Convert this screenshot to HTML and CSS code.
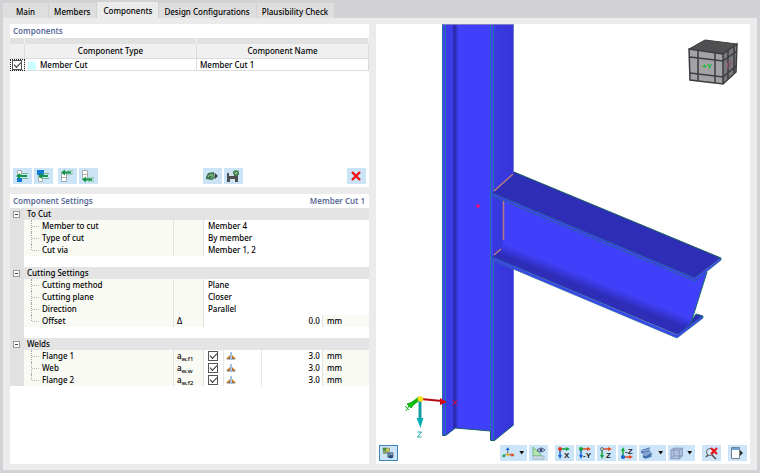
FILE: index.html
```html
<!DOCTYPE html>
<html lang="en">
<head>
<meta charset="utf-8">
<title>Steel Joint - Components</title>
<link rel="stylesheet" href="styles.css">
</head>
<body>
<nav class="tabs">
  <button class="tab tab-main">Main</button>
  <button class="tab">Members</button>
  <button class="tab active">Components</button>
  <button class="tab">Design Configurations</button>
  <button class="tab">Plausibility Check</button>
</nav>
<main class="page">
  <div class="side">
    <section class="panel components">
      <h2 class="title">Components</h2>
      <table class="list">
        <colgroup><col class="c-check"><col><col></colgroup>
        <thead>
          <tr class="strip"><td></td><td></td><td></td></tr>
          <tr><th></th><th>Component Type</th><th>Component Name</th></tr>
        </thead>
        <tbody>
          <tr>
            <td class="focus"><input type="checkbox" class="check" aria-label="Use Member Cut 1" checked></td>
            <td><span class="swatch"></span>Member Cut</td>
            <td>Member Cut 1</td>
          </tr>
        </tbody>
      </table>
      <div class="bar">
        <div class="group">
          <button class="tool" aria-label="Insert before"><svg viewBox="0 0 19 16"><path d="M4.500 2.500h4v4h-4z" fill="#fff" stroke="#aaa"/><path d="M4 10h5v4H4z" fill="#1479d4"/><path d="M9 5.500h6M9 10.500h6" stroke="#6fbf91"/><path d="M3 8l4-3v2h7v2H7v2z" fill="#169447"/></svg></button>
          <button class="tool" aria-label="Insert after"><svg viewBox="0 0 19 16"><path d="M3 2h7v5H3z" fill="#1479d4"/><path d="M4.500 9.500h4v4h-4z" fill="#fff" stroke="#aaa"/><path d="M9 5.500h6M9 10.500h6" stroke="#6fbf91"/><path d="M4 8l4-3v2h6v2H8v2z" fill="#169447"/></svg></button>
        </div>
        <div class="group">
          <button class="tool" aria-label="Move to top"><svg viewBox="0 0 19 16"><path d="M3.500 5.500h5v8h-5zM3.500 9.500h5" fill="#fff" stroke="#aaa"/><path d="M9 3h6M9 6h6" stroke="#6fbf91"/><path d="M3 4.500l4-3v2h6v2H7v2z" fill="#169447"/></svg></button>
          <button class="tool" aria-label="Move to bottom"><svg viewBox="0 0 19 16"><path d="M3.500 2.500h5v8h-5zM3.500 6.500h5" fill="#fff" stroke="#aaa"/><path d="M9 10h6M9 13h6" stroke="#6fbf91"/><path d="M3 11.500l4-3v2h6v2H7v2z" fill="#169447"/></svg></button>
        </div>
        <div class="group center">
          <button class="tool" aria-label="Load component"><svg viewBox="0 0 19 16"><path d="M3 9l2-4 6-1 1 6-3 2-6-1z" fill="#3e7650"/><path d="M5 9q1-3 4-2t-1 3" fill="none" stroke="#a8d9a9"/><path d="M12 5l3 3-3 3z" fill="#444"/></svg></button>
          <button class="tool" aria-label="Save component"><svg viewBox="0 0 19 16"><path d="M3 5h11v9H3z" fill="#4b4e51"/><path d="M5 5h5v3H5zM6 11h5v3H6z" fill="#d4e2ec"/><path d="M9 6V3l3-1 3 1v4l-3 1z" fill="#4e8b59"/><path d="M11 6l2-2" stroke="#b6dfba"/></svg></button>
        </div>
        <button class="tool" aria-label="Delete component"><svg viewBox="0 0 19 16"><path d="M5 4l8 8M13 4l-8 8" stroke="#f20d0d" stroke-width="2.300"/></svg></button>
      </div>
    </section>
    <section class="panel settings">
      <h2 class="title">Component Settings<span>Member Cut 1</span></h2>
      <table class="props">
        <colgroup><col class="p-gutter"><col><col class="p-symbol"><col class="p-check"><col class="p-icon"><col class="p-value"><col class="p-unit"></colgroup>
        <tbody>
          <tr class="head"><td><button class="toggle" aria-label="Collapse To Cut"></button></td><th colspan="6">To Cut</th></tr>
          <tr><td></td><th>Member to cut</th><td class="sym"></td><td colspan="4">Member 4</td></tr>
          <tr><td></td><th>Type of cut</th><td class="sym"></td><td colspan="4">By member</td></tr>
          <tr class="last"><td></td><th>Cut via</th><td class="sym"></td><td colspan="4">Member 1, 2</td></tr>
          <tr class="space"><td></td><td colspan="6"></td></tr>
        </tbody>
        <tbody>
          <tr class="head"><td><button class="toggle" aria-label="Collapse Cutting Settings"></button></td><th colspan="6">Cutting Settings</th></tr>
          <tr><td></td><th>Cutting method</th><td class="sym"></td><td colspan="4">Plane</td></tr>
          <tr><td></td><th>Cutting plane</th><td class="sym"></td><td colspan="4">Closer</td></tr>
          <tr><td></td><th>Direction</th><td class="sym"></td><td colspan="4">Parallel</td></tr>
          <tr class="last"><td></td><th>Offset</th><td class="sym">Δ</td><td colspan="3" class="num">0.0</td><td class="unit">mm</td></tr>
          <tr class="space"><td></td><td colspan="6"></td></tr>
        </tbody>
        <tbody class="welds">
          <tr class="head"><td><button class="toggle" aria-label="Collapse Welds"></button></td><th colspan="6">Welds</th></tr>
          <tr><td></td><th>Flange 1</th><td class="sym">a<small>w,f1</small></td><td><input type="checkbox" class="check" aria-label="Weld flange 1" checked></td><td class="line"><svg class="weld" viewBox="0 0 10 10"><path d="M4 1h2v6h3v2H1V7h3z" fill="#9fc0e3"/><path d="M4 4v4H0zM6 4v4h4z" fill="#bd721d"/></svg></td><td class="num line">3.0</td><td class="unit">mm</td></tr>
          <tr><td></td><th>Web</th><td class="sym">a<small>w,w</small></td><td><input type="checkbox" class="check" aria-label="Weld web" checked></td><td class="line"><svg class="weld" viewBox="0 0 10 10"><path d="M4 1h2v6h3v2H1V7h3z" fill="#9fc0e3"/><path d="M4 4v4H0zM6 4v4h4z" fill="#bd721d"/></svg></td><td class="num line">3.0</td><td class="unit">mm</td></tr>
          <tr class="last"><td></td><th>Flange 2</th><td class="sym">a<small>w,f2</small></td><td><input type="checkbox" class="check" aria-label="Weld flange 2" checked></td><td class="line"><svg class="weld" viewBox="0 0 10 10"><path d="M4 1h2v6h3v2H1V7h3z" fill="#9fc0e3"/><path d="M4 4v4H0zM6 4v4h4z" fill="#bd721d"/></svg></td><td class="num line">3.0</td><td class="unit">mm</td></tr>
        </tbody>
      </table>
    </section>
  </div>
  <section class="panel viewer">
    <svg class="scene" viewBox="376 24 374 440" preserveAspectRatio="xMidYMin meet" role="img" aria-label="Steel joint model">
      <defs>
        <linearGradient id="fold"><stop offset="0" stop-color="#3737df"/><stop offset=".3" stop-color="#2828a4"/><stop offset=".5" stop-color="#2d2db6"/><stop offset="1" stop-color="#4040fa"/></linearGradient>
        <linearGradient id="rearFlange"><stop offset="0" stop-color="#3a3ae2"/><stop offset="1" stop-color="#3535d8"/></linearGradient>
        <linearGradient id="lower" gradientUnits="userSpaceOnUse" x1="600" y1="282" x2="594" y2="297"><stop offset="0" stop-color="#4040fa"/><stop offset=".7" stop-color="#2d2db8"/></linearGradient>
      </defs>
      <!-- column -->
      <path d="M442.500 24H513.500V425L494.500 440.500L491 440V431L455 428L445.500 435.500H442.500z" fill="#4040fa"/>
      <path d="M446 24h10v404l-10 7.500z" fill="#3b3bea"/>
      <path d="M452.500 24h6v404h-6z" fill="url(#fold)"/>
      <path d="M494 24h19.500v401L494 440.500z" fill="url(#rearFlange)"/>
      <path d="M442.500 24V435.500M445.500 24V435.500M490.500 24V440M493.500 24V440.500" fill="none" stroke="#23789b"/>
      <path d="M442.500 435.500h3L455 428l35.500 3v9.500h4L513.500 425" fill="none" stroke="#176269"/>
      <path d="M513.500 24V172" stroke="#728aba" stroke-width=".6"/>
      <path d="M442.500 24.500h71" stroke="#8080c7"/>
      <!-- beam -->
      <path d="M696 314l7 2-25 19 12-12z" fill="#2d2db5" stroke="#17696d"/>
      <path d="M502 198L707 272L690 326L502 250z" fill="#4040fa"/>
      <path d="M503 198v51l-10 7v-60z" fill="#3737de"/>
      <path d="M503 240L692 318L690 326L678 335L492 257L502 249z" fill="url(#lower)"/>
      <path d="M690 326L707 272" stroke="#17696d"/>
      <path d="M492 257L677 335L703 316V318L677 338L492 260z" fill="#4040f5" stroke="#236f9b" stroke-width=".8"/>
      <path d="M514 172L721 258L694.500 278L492 193z" fill="#2d2db5"/>
      <path d="M514 172L721 258" stroke="#195d62"/>
      <path d="M492 193L694.500 278L721 258V260L695 281L492 196z" fill="#4040f0" stroke="#236f8b" stroke-width=".8"/>
      <path d="M494 191l19-17M503.500 201v39M494 255l7-6" stroke="#b77983" stroke-width="1.500"/>
      <path d="M476 206h4M478 204v4" stroke="#f00b6d" stroke-width="1.500"/>
      <!-- axes -->
      <path d="M420 398l-8 6" stroke="#10ba13" stroke-width="4"/>
      <path d="M416 401l-9 3 4 4zM405 406l4 4M409 406l-3 5" fill="#0ec60e" stroke="#10ad10"/>
      <path d="M420 399v20" stroke="#159da4" stroke-width="3"/>
      <path d="M416.500 418h7l-3 10z" fill="#08adb5"/>
      <path d="M421 399l21 2" stroke="#b70b12" stroke-width="2"/>
      <path d="M440 398l7 4-7 3z" fill="#d20810"/>
      <circle cx="420.500" cy="399" r="2.800" fill="#f7df18"/>
      <path d="M453 400l4 5M457 400l-4 5" stroke="#dd0b36"/>
      <path d="M417.500 432h4l-4 5h4" fill="none" stroke="#15a6ac"/>
      <!-- orientation cube -->
      <path d="M689 49l16-9 32 4-14 10z" fill="#505052"/>
      <path d="M689 49l34 5v30l-33-4z" fill="#a3a3a7"/>
      <path d="M723 54l14-10-1 28-13 12z" fill="#77777c"/>
      <path d="M689 49l34 5v30l-33-4zM723 54l14-10-1 28-13 12M698 50v31M715 53v30M690 57l33 4 14-10M690 73l33 4 13-11M728 50v29M734 46v28" fill="none" stroke="#3d3d40" stroke-width="1.500"/>
      <path d="M689 49l16-9 32 4" fill="none" stroke="#3d3d40"/>
      <text class="face" x="702" y="69" fill="#10bc25">+Y</text>
      <path d="M727.500 63l3-2v5l-3 2z" fill="none" stroke="#98525a"/>
    </svg>
    <div class="bar viewbar">
      <button class="tool pressed" aria-label="Display options"><svg viewBox="0 0 19 16"><path d="M3 2h8v7H3z" fill="#849f70"/><path d="M3 2h4v3H3z" fill="#438f3d"/><path d="M7 3h3v3H7z" fill="#e5c946"/><path d="M8 7h7v6H8z" fill="#738da9"/><circle cx="12" cy="11" r="3" fill="#294f7d"/><path d="M10 11l2-2 2 1" stroke="#d8e4ef" fill="none"/></svg></button>
      <div class="group end">
        <button class="tool drop" aria-label="Axes"><svg viewBox="0 0 28 16"><path d="M8 9V3M8 9l-5 2M8 9l6 2" stroke="#3c6cac" fill="none"/><path d="M6 5l2-3 2 3z" fill="#1758c5"/><circle cx="4" cy="11" r="1.500" fill="#16a653"/><path d="M9 10h5" stroke="#e76528"/><path d="M12 8l3 2-3 2z" fill="#e34216"/><circle cx="8" cy="9.500" r="1.500" fill="#e8b32d"/><path d="M20 6h5l-2.500 3.500z" fill="#111"/></svg></button>
        <button class="tool" aria-label="Visibility"><svg viewBox="0 0 19 16"><path d="M4 2v9h9z" fill="#b6e5b2" stroke="#68b978"/><path d="M4 11h11v3H4z" fill="#d1dce4" stroke="#8cabb7" stroke-width=".7"/><path d="M8 5q4-4 8 0-4 4-8 0z" fill="#d6dfed" stroke="#4c5d86"/><circle cx="12" cy="5" r="1.500" fill="#344a79"/></svg></button>
      </div>
      <div class="group">
        <button class="tool axis" aria-label="View in X"><svg viewBox="0 0 19 16"><path d="M5 4v8" stroke="#1464db" stroke-width="1.500"/><path d="M5 4h8" stroke="#12a542" stroke-width="1.500"/><path d="M3 10h4l-2 4z" fill="#1464db"/><path d="M11 2l4 2-4 2z" fill="#12a542"/><circle cx="5" cy="4" r="2" fill="#e43920"/><text x="9" y="13">X</text></svg></button>
        <button class="tool axis" aria-label="View in -Y"><svg viewBox="0 0 19 16"><path d="M5 4v8" stroke="#1464db" stroke-width="1.500"/><path d="M5 4h8" stroke="#e54b21" stroke-width="1.500"/><path d="M3 10h4l-2 4z" fill="#1464db"/><path d="M11 2l4 2-4 2z" fill="#e54b21"/><circle cx="5" cy="4" r="2" fill="#12a542"/><text x="7" y="13">-Y</text></svg></button>
        <button class="tool axis" aria-label="View in Z"><svg viewBox="0 0 19 16"><path d="M5 4v8" stroke="#12a542" stroke-width="1.500"/><path d="M5 4h8" stroke="#e54b21" stroke-width="1.500"/><path d="M3 10h4l-2 4z" fill="#12a542"/><path d="M11 2l4 2-4 2z" fill="#e54b21"/><circle cx="5" cy="4" r="1.500" fill="#e9e465" stroke="#586fbd"/><text x="9" y="13">Z</text></svg></button>
        <button class="tool axis" aria-label="View in -Z"><svg viewBox="0 0 19 16"><path d="M5 12V4" stroke="#12a542" stroke-width="1.500"/><path d="M5 12h8" stroke="#e54b21" stroke-width="1.500"/><path d="M3 6h4L5 2z" fill="#12a542"/><path d="M11 10l4 2-4 2z" fill="#e54b21"/><circle cx="5" cy="12" r="2" fill="#1464db"/><text x="7" y="9">-Z</text></svg></button>
        <button class="tool drop" aria-label="Render mode"><svg viewBox="0 0 28 16"><path d="M2 5l3-1 6-2v5l-6 2-3-1z" fill="#527bb7"/><path d="M2 5l3 1 6-2" fill="none" stroke="#a8c4e4"/><path d="M4 10l3 1 6-2v-2l-2-1-7 2z" fill="#86a4ce"/><path d="M4 10v3l3 1 6-2V8l-6 3z" fill="#4672ad"/><path d="M20 6h5l-2.500 3.500z" fill="#111"/></svg></button>
        <button class="tool drop" aria-label="Box display"><svg viewBox="0 0 28 16"><path d="M3 5l3-2h9v8l-3 3H3z" fill="#afc1df"/><path d="M3 5l3-2h9v8l-3 3H3zM3 5h9v9M12 5l3-2M6 3v8h9M6 11l-3 3" fill="none" stroke="#8499bd"/><path d="M20 6h5l-2.500 3.500z" fill="#111"/></svg></button>
      </div>
      <button class="tool" aria-label="Reset selection"><svg viewBox="0 0 19 16"><circle cx="8" cy="7" r="3.500" fill="#dbe9f3" stroke="#596570"/><path d="M10 10l4 4M6 10l-2 2" stroke="#594c44" stroke-width="1.500"/><path d="M9 3l6 6M15 3L9 9" stroke="#ef1015" stroke-width="2"/></svg></button>
      <button class="tool" aria-label="Dock panel"><svg viewBox="0 0 19 16"><path d="M3.500 2.500h8v11h-8z" fill="#fff" stroke="#718190"/><path d="M4 3h7v2H4z" fill="#70a6d6"/><path d="M12 5l3 3-3 3z" fill="#333"/></svg></button>
    </div>
  </section>
</main>
</body>
</html>
```
FILE: styles.css
```css
* { box-sizing: border-box; }
body {
  margin: 0;
  min-height: 100vh;
  display: flex;
  flex-direction: column;
  padding: 3px;
  background: #d1d1d6;
  color: #000;
  font: 500 8px/12px "Noto Sans", "Open Sans", sans-serif;
}
button { border: 0; padding: 0; font: inherit; color: inherit; }
.tabs { display: flex; align-items: flex-end; height: 15px; }
.tab { height: 15px; padding: 2px 6px 0 5px; background: #dedede; border-right: 1px solid #d1d1d1; white-space: nowrap; }
.tab-main { padding: 2px 13px 0; }
.tab.active { height: 16px; padding: 2px 6px 0; background: #ebebeb; }
.page {
  flex: 1;
  display: grid;
  grid-template-columns: 359fr 374fr;
  gap: 7px;
  padding: 6px 7px;
  background: #ebebeb;
}
.side { display: flex; flex-direction: column; gap: 7px; min-width: 0; }
.panel { background: #fff; }
.components { display: flex; flex-direction: column; flex: 163 0 auto; min-height: 163px; }
.settings { flex: 270 0 auto; min-height: 270px; }
.title {
  display: flex;
  justify-content: space-between;
  margin: 0;
  padding: 0 4px 0 3px;
  font-size: 8px;
  line-height: 14px;
  font-weight: 600;
  color: #5b6c98;
}
table { width: 100%; table-layout: fixed; border-collapse: separate; border-spacing: 0; }
th, td { padding: 0; font-weight: inherit; text-align: left; white-space: nowrap; }

.c-check { width: 15px; }
.list td, .list th { height: 12px; border-right: 1px solid #dcdcdc; border-bottom: 1px solid #dcdcdc; }
.list .strip td { height: 6px; background: #e1e1e1; border-right-color: #f0f0f0; border-bottom: 0; }
.list th { height: 15px; background: #f0f0f0; text-align: center; }
.list tbody td { padding-left: 3px; line-height: 11px; }
.list tbody .focus { padding: 0; outline: 1px dotted #222; outline-offset: -1px; text-align: center; }
.swatch { display: inline-block; width: 8px; height: 8px; margin-right: 4px; background: #ccffff; vertical-align: middle; }
.check {
  appearance: none;
  display: block;
  width: 10px;
  height: 10px;
  margin: 0 auto;
  border: 1px solid #555;
  background: #fff;
}
.check:checked::before {
  content: "";
  display: block;
  width: 6px;
  height: 3px;
  margin: 1px;
  border: solid #333;
  border-width: 0 0 1px 1px;
  transform: rotate(-45deg);
}

.bar { display: flex; align-items: center; margin-top: auto; padding: 3px; gap: 5px; }
.group { display: flex; gap: 2px; }
.center { margin: 0 auto; }
.tool { display: block; width: 19px; height: 16px; background: #cce4f7; }
.tool svg { display: block; width: 100%; height: 100%; }
.drop { width: 27px; }
.pressed { border: 1px solid #3f84b8; }

.p-gutter { width: 14px; }
.p-symbol { width: 31px; }
.p-check { width: 19px; }
.p-icon { width: 38px; }
.p-value { width: 61px; }
.p-unit { width: 47px; }
.props tr { height: 12px; }
.props td:first-child { background: #e1e1e1; }
.props .space, .props .space td { height: 11px; line-height: 11px; }
.head { background: #e4e4e4; }
.props .head th { padding-left: 3px; background: none; }
.props th { position: relative; padding-left: 18px; background: #f9faf4; }
.props tr:not(.head) th::before {
  content: "";
  position: absolute;
  left: 7px;
  top: 0;
  height: 12px;
  border-left: 1px dotted #aaa;
}
.props tr.last:not(.head) th::before { height: 6px; }
.props tr:not(.head) th::after {
  content: "";
  position: absolute;
  left: 8px;
  top: 6px;
  width: 7px;
  border-top: 1px dotted #bbb;
}
.sym { padding-left: 3px; background: #f9faf4; border-left: 1px solid #e2e2de; border-right: 1px solid #e2e2de; }
.sym small { position: relative; top: 2px; font-size: 6px; line-height: 0; }
.props td:nth-child(4):not(.num) { padding-left: 4px; }
.props .welds td:nth-child(4) { padding-left: 0; }
.num { text-align: right; padding-right: 2px; }
.unit { padding-left: 4px; background: #f9faf4; border-left: 1px solid #e2e2de; }
.line { border-left: 1px solid #e6e6e6; }
.weld { display: block; width: 10px; height: 10px; margin-left: 2px; }
.toggle { display: block; width: 7px; height: 7px; margin: 0 0 0 3px; border: 1px solid #999; background: #fff; }
.toggle::before { content: ""; display: block; width: 3px; height: 1px; margin: 0 1px; background: #444; }

.viewer { display: grid; min-width: 0; }
.scene { grid-area: 1 / 1; width: 100%; height: 100%; min-height: 440px; }
.viewbar { grid-area: 1 / 1; align-self: end; gap: 7px; padding: 3px; }
.end { margin-left: auto; }
.face { font: bold 8px "Liberation Sans", sans-serif; }
.axis text { font: bold 8px "Liberation Sans", sans-serif; fill: #222; }
```
